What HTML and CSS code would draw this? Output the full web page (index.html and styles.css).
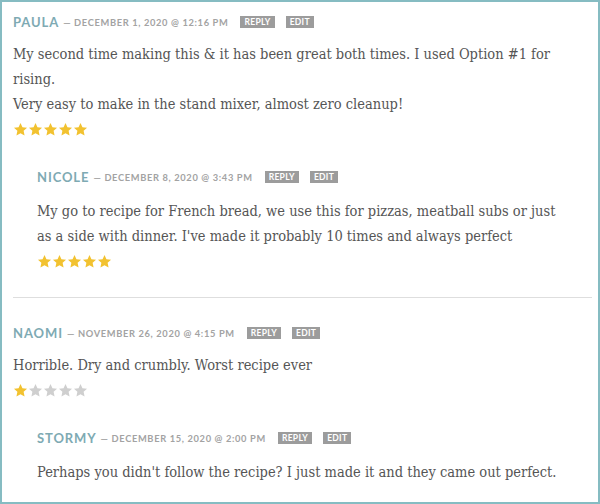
FILE: index.html
```html
<!DOCTYPE html>
<html>
<head>
<meta charset="utf-8">
<link rel="stylesheet" href="styles.css">
</head>
<body>
<div class="frame">
  <div class="comment">
    <div class="meta"><span class="name">Paula</span><span class="date">— December 1, 2020 @ 12:16 pm</span><span class="btn">Reply</span><span class="btn">Edit</span></div>
    <div class="text"><p>My second time making this &amp; it has been great both times. I used Option #1 for rising.<br>Very easy to make in the stand mixer, almost zero cleanup!</p></div>
    <div class="stars" data-rating="5"></div>
    <div class="children">
      <div class="comment child">
        <div class="meta"><span class="name">Nicole</span><span class="date">— December 8, 2020 @ 3:43 pm</span><span class="btn">Reply</span><span class="btn">Edit</span></div>
        <div class="text"><p>My go to recipe for French bread, we use this for pizzas, meatball subs or just as a side with dinner. I've made it probably 10 times and always perfect</p></div>
        <div class="stars" data-rating="5"></div>
      </div>
    </div>
  </div>
  <hr class="divider">
  <div class="comment">
    <div class="meta"><span class="name">Naomi</span><span class="date">— November 26, 2020 @ 4:15 pm</span><span class="btn">Reply</span><span class="btn">Edit</span></div>
    <div class="text"><p>Horrible. Dry and crumbly. Worst recipe ever</p></div>
    <div class="stars" data-rating="1"></div>
    <div class="children">
      <div class="comment child">
        <div class="meta"><span class="name">Stormy</span><span class="date">— December 15, 2020 @ 2:00 pm</span><span class="btn">Reply</span><span class="btn">Edit</span></div>
        <div class="text"><p>Perhaps you didn't follow the recipe? I just made it and they came out perfect.</p></div>
      </div>
    </div>
  </div>
</div>
<script>
document.querySelectorAll('.stars').forEach(function(el){
  var r = +el.dataset.rating, h = '';
  for (var i = 0; i < 5; i++) {
    h += '<svg class="star ' + (i < r ? 'on' : 'off') + '" viewBox="0 0 24 24" width="15" height="15"><polygon points="12,1.5 15.1,8.2 22.5,9 17,14 18.5,21.5 12,17.8 5.5,21.5 7,14 1.5,9 8.9,8.2"/></svg>';
  }
  el.innerHTML = h;
});
</script>
</body>
</html>
```

FILE: styles.css
```css
html, body {
  margin: 0;
  padding: 0;
  background: #fff;
}
.frame {
  width: 600px;
  height: 504px;
  box-sizing: border-box;
  border: 2px solid #86bcc2;
  padding: 10px 0 0 11px;
  overflow: hidden;
}
.comment {
  display: flex;
  flex-direction: column;
}
.meta {
  display: flex;
  align-items: center;
  height: 20px;
  font-family: "Lato", "Open Sans", sans-serif;
  font-weight: 700;
  text-transform: uppercase;
}
.name {
  font-size: 13px;
  letter-spacing: 0.9px;
  color: #7eaab3;
}
.date {
  font-size: 9.3px;
  letter-spacing: 0.65px;
  color: #a3a3a3;
  margin-left: 4px;
}
.btn {
  font-size: 8.5px;
  letter-spacing: 0.3px;
  color: #fff;
  background: #9c9c9c;
  padding: 0 4px;
  height: 12px;
  line-height: 12px;
  margin-left: 12px;
}
.btn + .btn {
  margin-left: 11px;
}
.text {
  font-family: "DejaVu Serif Condensed", "DejaVu Serif", serif;
  font-stretch: condensed;
  font-size: 14.5px;
  line-height: 25px;
  color: #555;
  margin-top: 10px;
  padding-right: 40px;
}
.text p {
  margin: 0;
}
.stars {
  display: flex;
  margin-top: 5px;
  height: 15px;
}
.star {
  display: block;
  width: 15px;
  height: 15px;
}
.star.on { fill: #f2c230; }
.star.off { fill: #cfcfcf; }
.children {
  margin-left: 24px;
  margin-top: 30px;
}
.child .text {
  margin-top: 12px;
}
.divider {
  border: 0;
  height: 1px;
  background: #dedede;
  margin: 28px 6px 25px 0;
}
```
